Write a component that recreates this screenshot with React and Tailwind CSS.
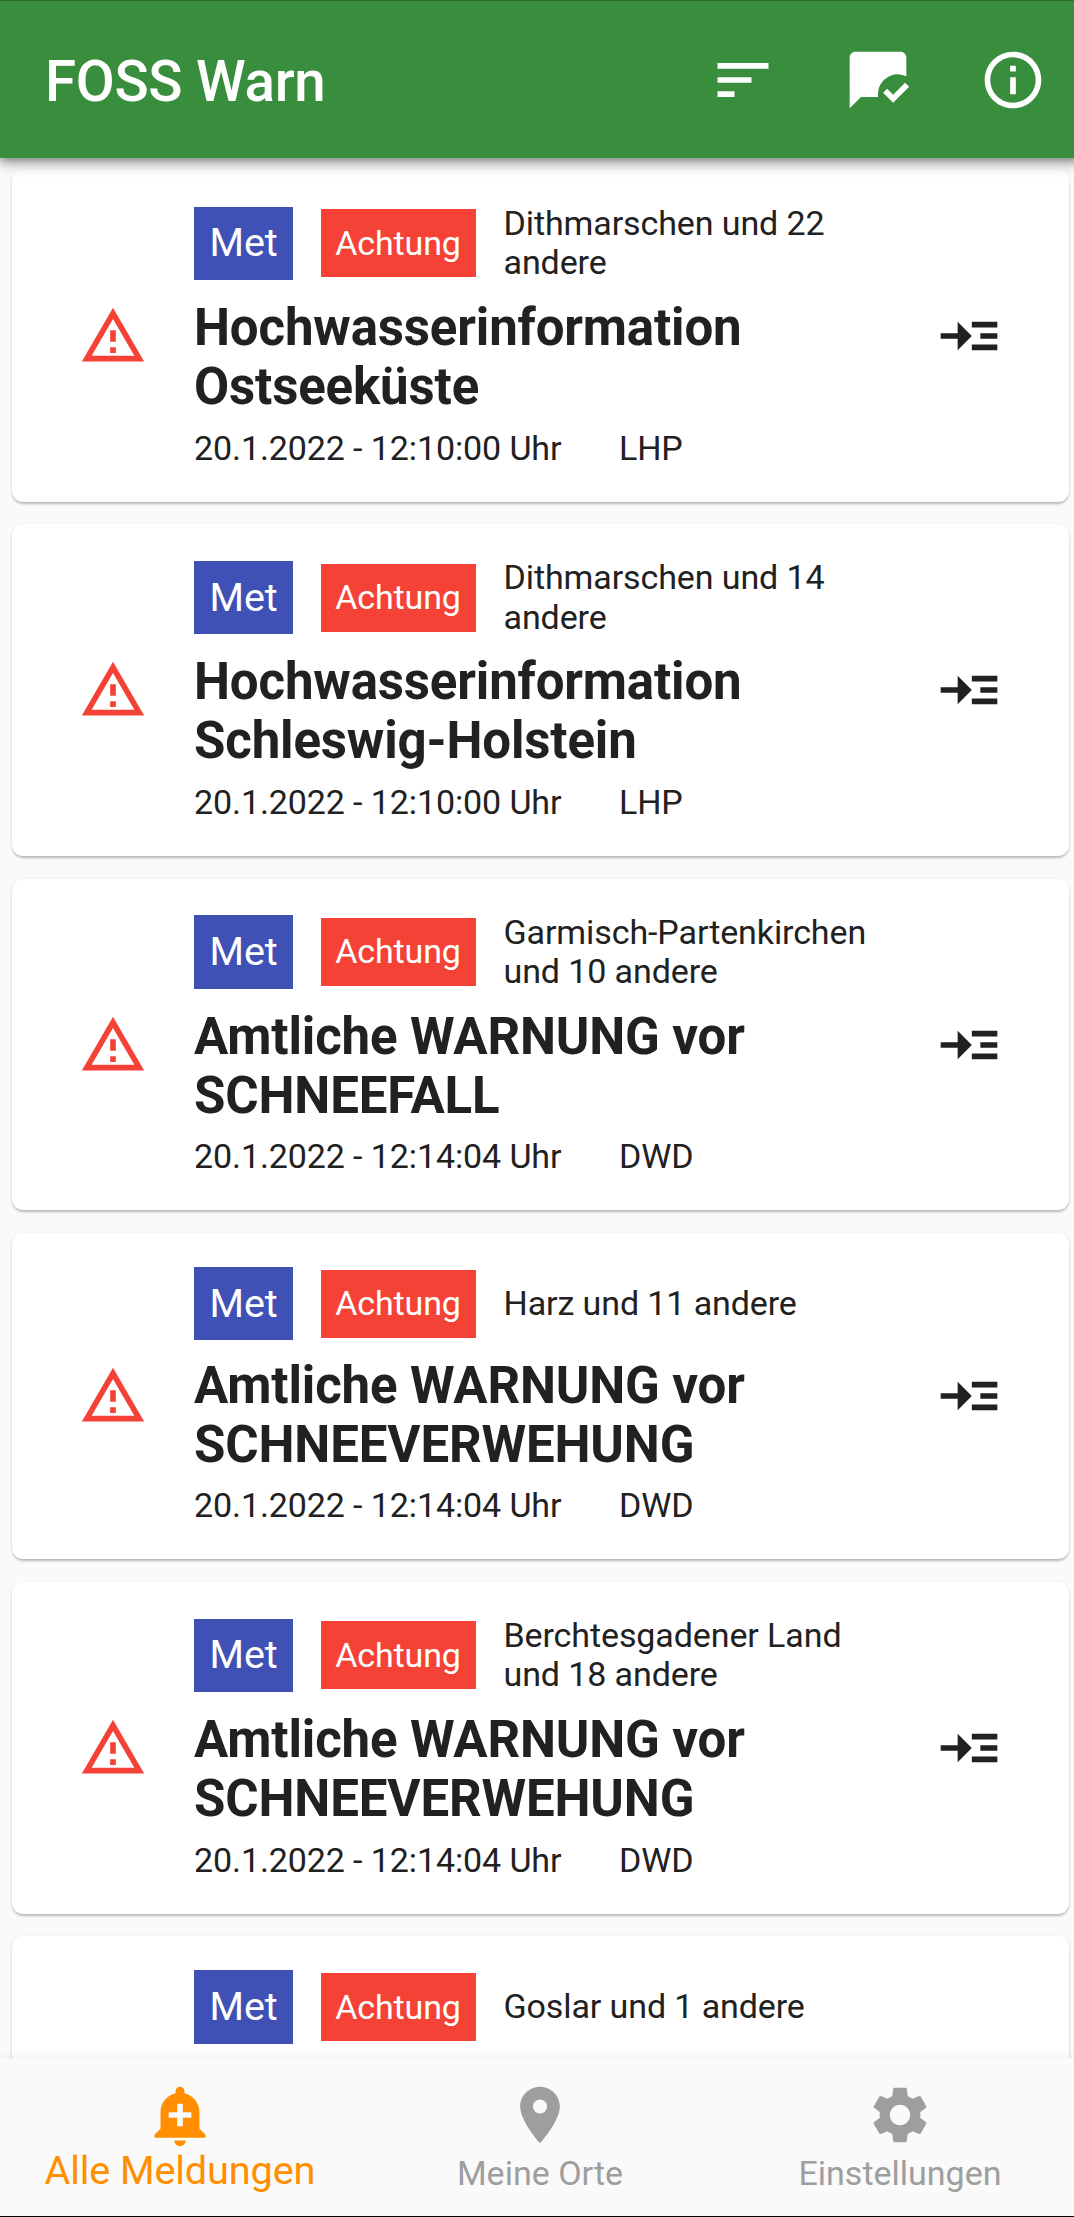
import React from "react";
import {
  MdSort,
  MdMarkChatRead,
  MdInfoOutline,
  MdReadMore,
  MdAddAlert,
  MdPlace,
  MdSettings,
} from "react-icons/md";

const warnings = [
  { region: "Dithmarschen und 22 andere", title: "Hochwasserinformation Ostseeküste", time: "20.1.2022 - 12:10:00 Uhr", source: "LHP" },
  { region: "Dithmarschen und 14 andere", title: "Hochwasserinformation Schleswig-Holstein", time: "20.1.2022 - 12:10:00 Uhr", source: "LHP" },
  { region: "Garmisch-Partenkirchen und 10 andere", title: "Amtliche WARNUNG vor SCHNEEFALL", time: "20.1.2022 - 12:14:04 Uhr", source: "DWD" },
  { region: "Harz und 11 andere", title: "Amtliche WARNUNG vor SCHNEEVERWEHUNG", time: "20.1.2022 - 12:14:04 Uhr", source: "DWD" },
  { region: "Berchtesgadener Land und 18 andere", title: "Amtliche WARNUNG vor SCHNEEVERWEHUNG", time: "20.1.2022 - 12:14:04 Uhr", source: "DWD" },
];

function WarningTriangle() {
  return (
    <svg viewBox="0 0 24 24" className="size-[68px] fill-[#f44336]">
      <path d="M12 5.99L19.53 19H4.47L12 5.99M12 2L1 21h22L12 2zm1 14h-2v2h2v-2zm0-6h-2v4h2v-4z" />
    </svg>
  );
}

function TagRow({ region }) {
  return (
    <div className="flex items-center">
      <span className="flex h-[73.5px] w-[99px] shrink-0 items-center justify-center bg-[#3f51b5] text-[39.5px] leading-[46px] tracking-[-0.2px] text-white">
        Met
      </span>
      <span className="ml-[27.5px] flex h-[68px] w-[155px] shrink-0 items-center justify-center bg-[#f44336] text-[34px] leading-[39px] tracking-[-0.1px] text-white">
        Achtung
      </span>
      <p className="ml-[28px] w-[385px] text-[34px] leading-[39.3px] tracking-[-0.1px]">{region}</p>
    </div>
  );
}

function WarningCard({ region, title, time, source }) {
  return (
    <article className="flex shrink-0 items-center rounded-[11px] bg-white pt-[34px] pb-[33.5px] shadow-[0_3px_3px_-1px_rgba(0,0,0,0.2),0_1px_3px_rgba(0,0,0,0.14)]">
      <div className="ml-[67px] w-[115.5px] shrink-0">
        <WarningTriangle />
      </div>
      <div className="w-[700px] shrink-0">
        <TagRow region={region} />
        <h2 className="mt-[15.5px] w-[600px] text-[51px] leading-[59px] font-bold tracking-[-0.15px]">{title}</h2>
        <div className="mt-[12.5px] mb-[0.5px] flex text-[34px] leading-[39px] tracking-[-0.1px]">
          <span className="w-[425px]">{time}</span>
          <span>{source}</span>
        </div>
      </div>
      <MdReadMore className="ml-[40.5px] size-[68px] shrink-0" />
    </article>
  );
}

export default function App() {
  return (
    <div className="h-[2217px] w-[1074px] overflow-hidden bg-[#fafafa] font-['Roboto',sans-serif] text-[#212121]">
      <div className="flex h-full w-[1080px] flex-col">
        <header className="z-10 flex h-[158.4px] shrink-0 items-center border-t border-[#2b6b2e] bg-[#388e3c] pr-[33.5px] pl-[45px] text-white shadow-[0_6px_12px_rgba(0,0,0,0.3),0_3px_6px_rgba(0,0,0,0.2)]">
          <h1 className="flex-1 pt-[5px] text-[56.5px] leading-[66px] font-medium tracking-[-0.3px]">FOSS Warn</h1>
          <div className="flex gap-[67px]">
            <MdSort className="size-[68px]" />
            <MdMarkChatRead className="size-[68px]" />
            <MdInfoOutline className="size-[68px]" />
          </div>
        </header>

        <main className="flex min-h-0 flex-1 flex-col gap-[22.7px] overflow-hidden px-[11.5px] pt-[11.6px]">
          {warnings.map((w, i) => (
            <WarningCard key={i} {...w} />
          ))}
          <article className="h-[327px] shrink-0 rounded-[11px] bg-white pt-[34px] pl-[182.5px] shadow-[0_3px_3px_-1px_rgba(0,0,0,0.2),0_1px_3px_rgba(0,0,0,0.14)]">
            <TagRow region="Goslar und 1 andere" />
          </article>
        </main>

        <nav className="z-10 grid h-[158.6px] shrink-0 grid-cols-3 border-b border-black bg-[#fafafa] pt-[23px] text-[#9e9e9e] shadow-[0_-2px_8px_rgba(0,0,0,0.06)]">
          <div className="flex flex-col items-center text-[#ff8f00]">
            <MdAddAlert className="size-[68px]" />
            <span className="-mt-[1px] text-[39.7px] leading-[46px] tracking-[-0.15px]">Alle Meldungen</span>
          </div>
          <div className="flex flex-col items-center">
            <MdPlace className="size-[68px]" />
            <span className="mt-[5px] text-[34px] leading-[39px]">Meine Orte</span>
          </div>
          <div className="flex flex-col items-center">
            <MdSettings className="size-[68px]" />
            <span className="mt-[5px] text-[34px] leading-[39px]">Einstellungen</span>
          </div>
        </nav>
      </div>
    </div>
  );
}
